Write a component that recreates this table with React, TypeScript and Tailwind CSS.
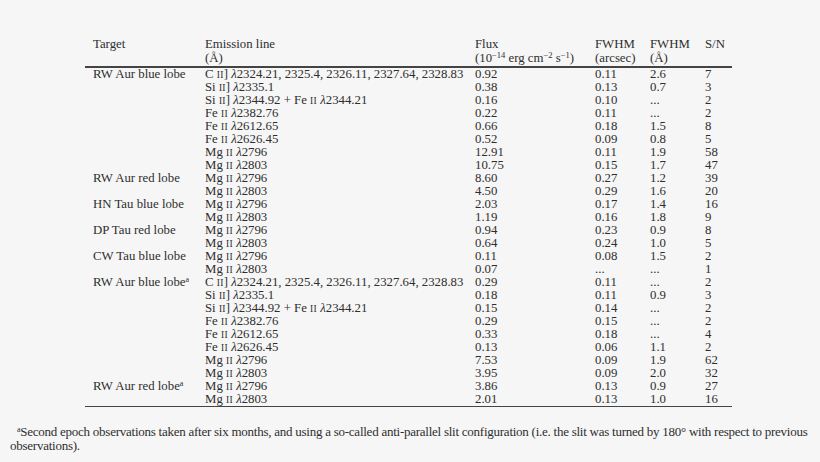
import React from "react";

type Row = { t?: React.ReactNode; e: React.ReactNode; f: string; a: string; w: string; s: string };

const Sc = ({ children }: { children: React.ReactNode }) => (
  <span className="text-[9.5px] tracking-[0.3px]">{children}</span>
);
const L = () => <span className="italic">λ</span>;

const ion = (el: string, num: string, bracket = false) => (
  <>
    {el} <Sc>{num}</Sc>
    {bracket ? "]" : ""}
  </>
);

const CII = (
  <>
    {ion("C", "II", true)} <L />2324.21, 2325.4, 2326.11, 2327.64, 2328.83
  </>
);
const SiII = (
  <>
    {ion("Si", "II", true)} <L />2335.1
  </>
);
const SiFe = (
  <>
    {ion("Si", "II", true)} <L />2344.92 + {ion("Fe", "II")} <L />2344.21
  </>
);
const fe = (w: string) => (
  <>
    {ion("Fe", "II")} <L />
    {w}
  </>
);
const mg = (w: string) => (
  <>
    {ion("Mg", "II")} <L />
    {w}
  </>
);
const Sup = () => <sup className="text-[8px] -top-[4px]">a</sup>;

const rows: Row[] = [
  { t: "RW Aur blue lobe", e: CII, f: "0.92", a: "0.11", w: "2.6", s: "7" },
  { e: SiII, f: "0.38", a: "0.13", w: "0.7", s: "3" },
  { e: SiFe, f: "0.16", a: "0.10", w: "...", s: "2" },
  { e: fe("2382.76"), f: "0.22", a: "0.11", w: "...", s: "2" },
  { e: fe("2612.65"), f: "0.66", a: "0.18", w: "1.5", s: "8" },
  { e: fe("2626.45"), f: "0.52", a: "0.09", w: "0.8", s: "5" },
  { e: mg("2796"), f: "12.91", a: "0.11", w: "1.9", s: "58" },
  { e: mg("2803"), f: "10.75", a: "0.15", w: "1.7", s: "47" },
  { t: "RW Aur red lobe", e: mg("2796"), f: "8.60", a: "0.27", w: "1.2", s: "39" },
  { e: mg("2803"), f: "4.50", a: "0.29", w: "1.6", s: "20" },
  { t: "HN Tau blue lobe", e: mg("2796"), f: "2.03", a: "0.17", w: "1.4", s: "16" },
  { e: mg("2803"), f: "1.19", a: "0.16", w: "1.8", s: "9" },
  { t: "DP Tau red lobe", e: mg("2796"), f: "0.94", a: "0.23", w: "0.9", s: "8" },
  { e: mg("2803"), f: "0.64", a: "0.24", w: "1.0", s: "5" },
  { t: "CW Tau blue lobe", e: mg("2796"), f: "0.11", a: "0.08", w: "1.5", s: "2" },
  { e: mg("2803"), f: "0.07", a: "...", w: "...", s: "1" },
  { t: <>RW Aur blue lobe<Sup /></>, e: CII, f: "0.29", a: "0.11", w: "...", s: "2" },
  { e: SiII, f: "0.18", a: "0.11", w: "0.9", s: "3" },
  { e: SiFe, f: "0.15", a: "0.14", w: "...", s: "2" },
  { e: fe("2382.76"), f: "0.29", a: "0.15", w: "...", s: "2" },
  { e: fe("2612.65"), f: "0.33", a: "0.18", w: "...", s: "4" },
  { e: fe("2626.45"), f: "0.13", a: "0.06", w: "1.1", s: "2" },
  { e: mg("2796"), f: "7.53", a: "0.09", w: "1.9", s: "62" },
  { e: mg("2803"), f: "3.95", a: "0.09", w: "2.0", s: "32" },
  { t: <>RW Aur red lobe<Sup /></>, e: mg("2796"), f: "3.86", a: "0.13", w: "0.9", s: "27" },
  { e: mg("2803"), f: "2.01", a: "0.13", w: "1.0", s: "16" },
];

const grid = "grid grid-cols-[8px_112px_270px_120px_55px_55px_27px]";

export default function App() {
  return (
    <div
      className="w-[820px] h-[462px] bg-[#f6f6f6] text-[#2e2e2e] overflow-hidden"
      style={{ fontFamily: '"Liberation Serif", "Times New Roman", serif' }}
    >
      <div className="ml-[85px] w-[647px] pt-[37px] text-[12.8px]">
        <div className={`${grid} leading-[14px]`}>
          <div />
          <div>Target</div>
          <div>Emission line</div>
          <div>Flux</div>
          <div>FWHM</div>
          <div>FWHM</div>
          <div>S/N</div>
          <div />
          <div />
          <div>(Å)</div>
          <div className="whitespace-nowrap">
            (10<sup className="text-[8.5px] -top-[4px]">−14</sup> erg cm
            <sup className="text-[8.5px] -top-[4px]">−2</sup> s<sup className="text-[8.5px] -top-[4px]">−1</sup>)
          </div>
          <div>(arcsec)</div>
          <div>(Å)</div>
          <div />
        </div>
        <div className="h-[1.5px] bg-[#444] mt-[1px]" />
        <div className="leading-[13px]">
          {rows.map((r, i) => (
            <div key={i} className={`${grid} h-[13px] whitespace-nowrap`}>
              <div />
              <div>{r.t}</div>
              <div>{r.e}</div>
              <div>{r.f}</div>
              <div>{r.a}</div>
              <div>{r.w}</div>
              <div>{r.s}</div>
            </div>
          ))}
        </div>
        <div className="h-[1.5px] bg-[#444]" />
      </div>
      <div className="mt-[18px] pl-[10px] text-[13px] leading-[14px] tracking-[-0.25px] whitespace-nowrap">
        <div className="pl-[7px]">
          <sup className="text-[8px] -top-[4px]">a</sup>Second epoch observations taken after six months, and using a
          so-called anti-parallel slit configuration (i.e. the slit was turned by 180° with respect to previous
        </div>
        <div>observations).</div>
      </div>
    </div>
  );
}
